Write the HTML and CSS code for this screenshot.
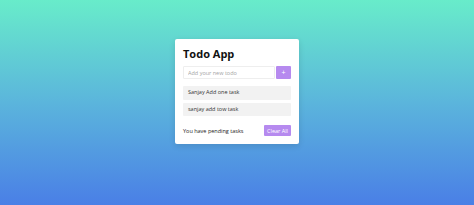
FILE: index.html
```html
<!DOCTYPE html>
<html lang="en">
<head>
    <meta charset="UTF-8">
    <meta name="viewport" content="width=device-width, initial-scale=1.0">
    <title>Todo App</title>
    <link rel="stylesheet" href="styles.css">
</head>
<body>
    <div class="wrapper">
        <header>Todo App</header>

        <!-- Input row -->
        <div class="input-field">
            <input type="text" placeholder="Add your new todo">
            <button class="add-btn">+</button>
        </div>

        <!-- Todo items -->
        <ul class="todo-list">
            <li>Sanjay Add one task</li>
            <li>sanjay add tow task</li>
        </ul>

        <!-- Footer -->
        <div class="footer">
            <span>You have pending tasks</span>
            <button class="clear-btn">Clear All</button>
        </div>
    </div>
</body>
</html>
```

FILE: styles.css
```css
* {
    margin: 0;
    padding: 0;
    box-sizing: border-box;
    font-family: 'Open Sans', 'DejaVu Sans', sans-serif;
}

html, body {
    height: 100%;
}

body {
    background: linear-gradient(to bottom, #68ecca 0%, #5bb5dc 50%, #4a7fe6 100%);
    display: flex;
    justify-content: center;
    align-items: flex-start;
    padding-top: 39px;
}

.wrapper {
    background: #fff;
    width: 124px;
    padding: 7px 8px 8px;
    border-radius: 2px;
    box-shadow: 0 2px 6px rgba(0, 0, 0, 0.12);
}

.wrapper header {
    font-size: 11px;
    font-weight: 700;
    line-height: 16px;
    color: #111;
    margin-bottom: 4px;
}

.input-field {
    display: flex;
    gap: 1px;
    height: 13px;
    margin-bottom: 7px;
}

.input-field input {
    flex: 1;
    min-width: 0;
    height: 100%;
    border: 1px solid #eee;
    border-radius: 1px;
    padding: 0 4px;
    font-size: 5.5px;
    color: #333;
    outline: none;
}

.input-field input::placeholder {
    color: #a5a5a5;
}

.add-btn {
    width: 15px;
    height: 100%;
    border: none;
    border-radius: 1px;
    background: #b68aef;
    color: #fff;
    font-size: 7px;
    line-height: 13px;
    cursor: pointer;
}

.todo-list {
    list-style: none;
    display: flex;
    flex-direction: column;
    gap: 3px;
}

.todo-list li {
    background: #f2f2f2;
    height: 13.5px;
    line-height: 13.5px;
    padding: 0 5px;
    border-radius: 1px;
    font-size: 5.5px;
    color: #333;
}

.footer {
    display: flex;
    justify-content: space-between;
    align-items: center;
    margin-top: 9px;
    font-size: 5.5px;
    color: #222;
}

.clear-btn {
    width: 27px;
    height: 11px;
    border: none;
    border-radius: 1px;
    background: #b68aef;
    color: #fff;
    font-size: 5.5px;
    cursor: pointer;
}
```
